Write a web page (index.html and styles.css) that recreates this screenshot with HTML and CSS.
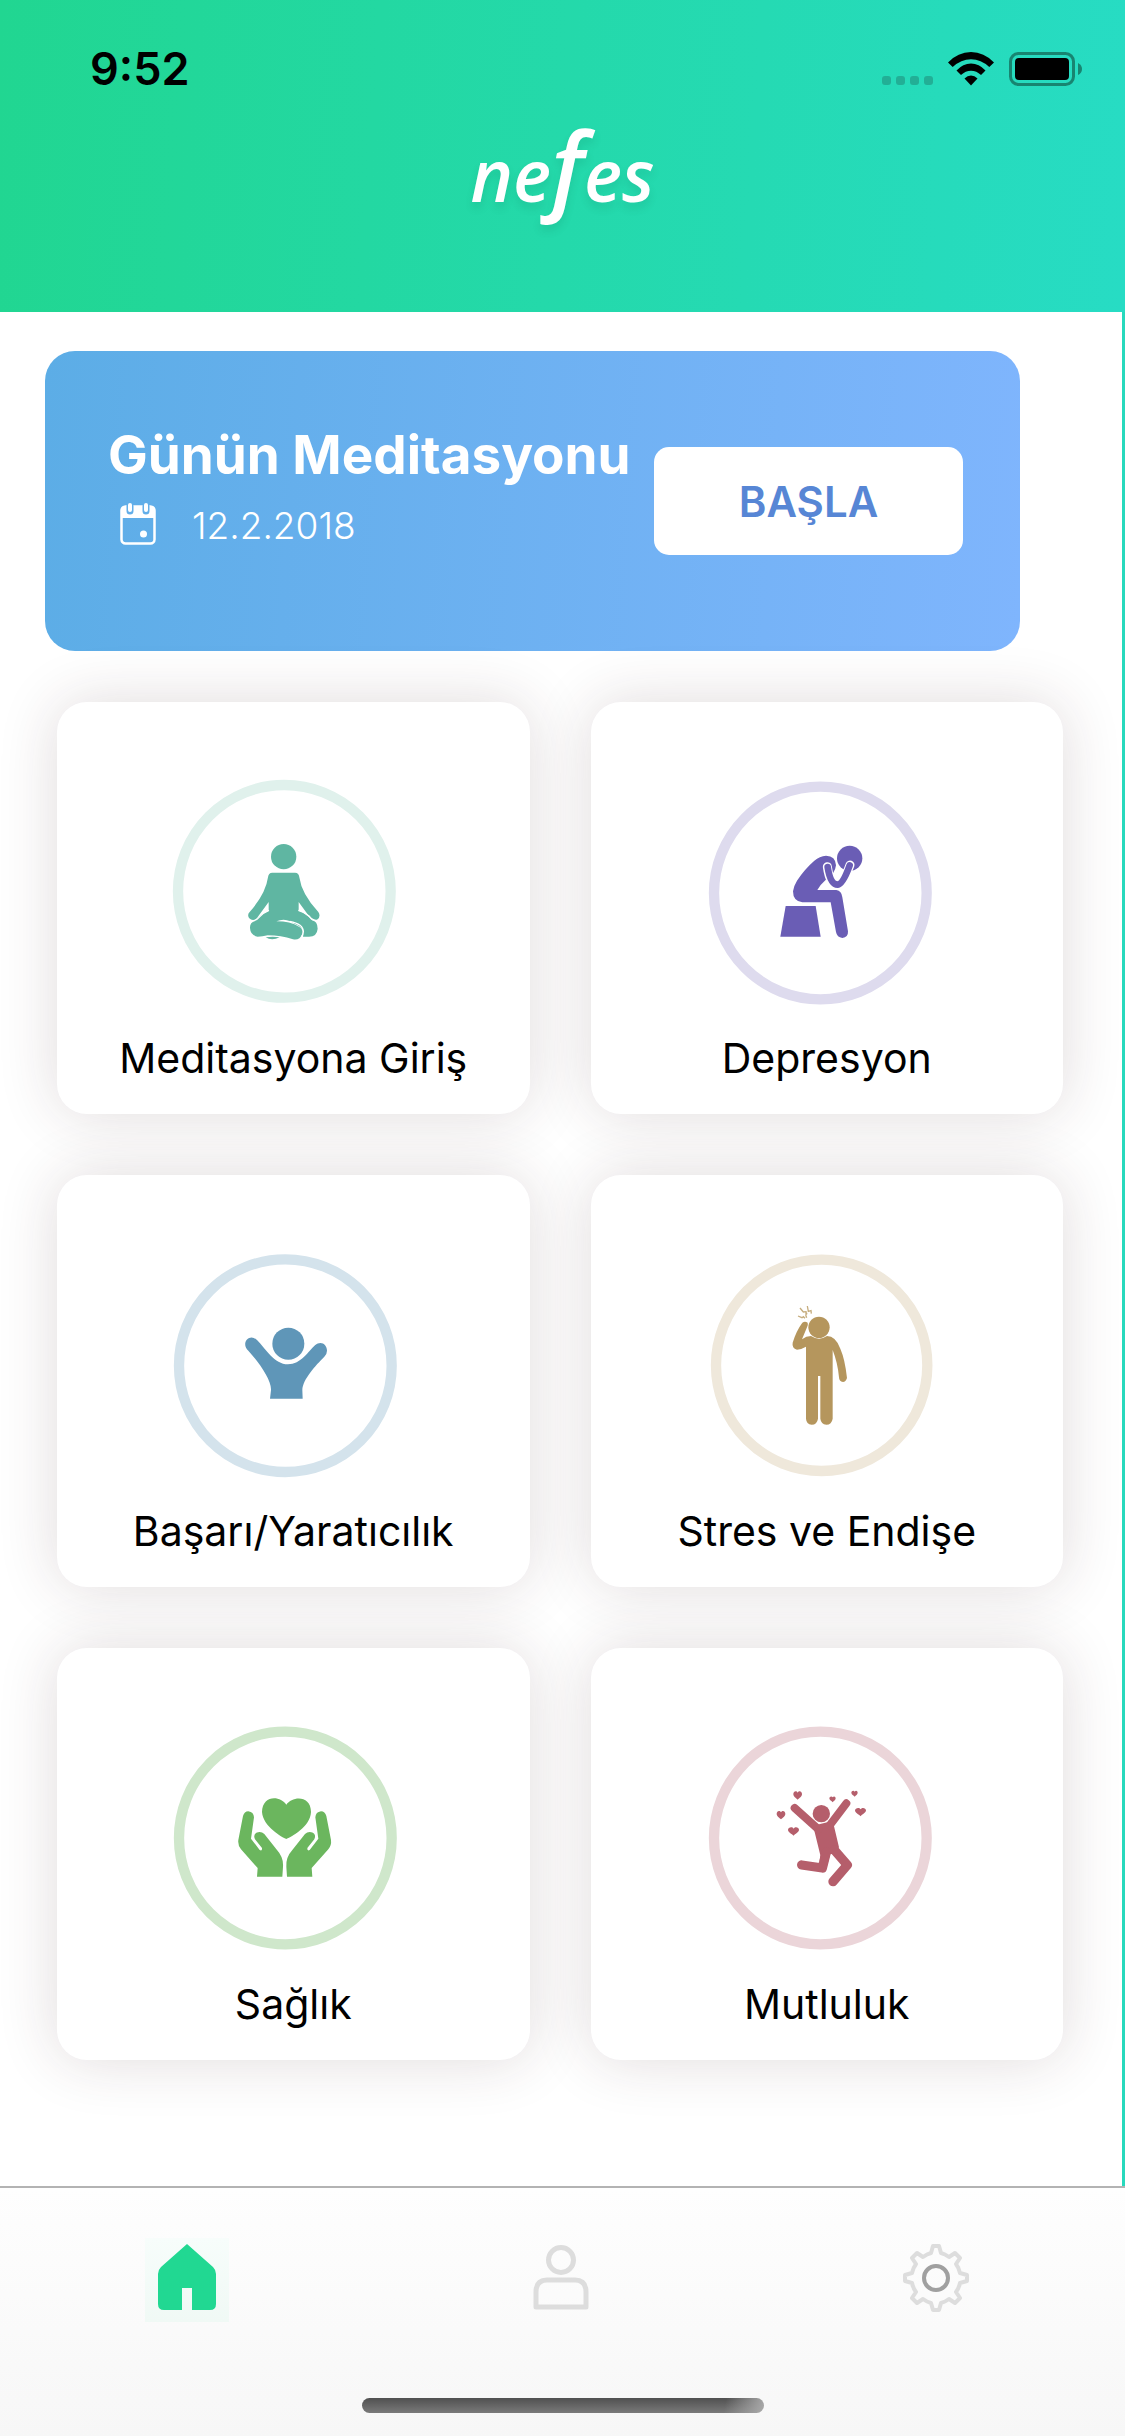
FILE: index.html
```html
<!DOCTYPE html>
<html lang="tr">
<head>
<meta charset="utf-8">
<meta name="viewport" content="width=device-width, initial-scale=1">
<title>nefes</title>
<link rel="stylesheet" href="styles.css">
</head>
<body>
<div class="app">
  <header class="header">
    <div class="status">
      <span class="time">9:52</span>
      <div class="indicators">
        <svg class="signal" width="52" height="34" viewBox="0 0 52 34" aria-hidden="true"><g fill="#22af96"><rect x="0" y="24" width="9" height="9" rx="3"/><rect x="14" y="24" width="9" height="9" rx="3"/><rect x="28" y="24" width="9" height="9" rx="3"/><rect x="42" y="24" width="9" height="9" rx="3"/></g></svg>
        <svg class="wifi" width="46" height="34" viewBox="0 0 46 34" aria-hidden="true"><path d="M0 10.5Q10 0 23 0T46 10.5L41.300 15Q33 7.200 23 7.200T4.700 15Z"/><path d="M8.500 18.500Q15 11.500 23 11.500T37.500 18.500L33 23Q28.500 18.700 23 18.700T13 23Z"/><path d="M16.500 26.500Q19.500 23.500 23 23.500T29.500 26.500L23 33.500Z"/></svg>
        <svg class="battery" width="74" height="34" viewBox="0 0 74 34" aria-hidden="true"><rect x="1.500" y="1.500" width="63" height="31" rx="8" fill="none" stroke="#188571" stroke-width="3"/><rect x="6" y="6" width="54" height="22" rx="4"/><path d="M69 11q4 2 4 6t-4 6z" fill="#188571"/></svg>
      </div>
    </div>
    <h1 class="logo">ne<span class="logo-f">f</span>es</h1>
  </header>

  <main class="content">
    <section class="banner">
      <div class="banner-text">
        <h2 class="banner-title">Günün Meditasyonu</h2>
        <p class="banner-date">
          <svg width="36" height="44" viewBox="0 0 36 44" aria-hidden="true"><rect x="1.500" y="3.500" width="33" height="37" rx="4" fill="none" stroke="#fff" stroke-width="2.500"/><path d="M1 15V7q0-4 4-4h26q4 0 4 4v8z" fill="#fff"/><g stroke-linecap="round"><path d="M10 3v5M26 3v5" stroke="#62aee9" stroke-width="7"/><path d="M10 2v5M26 2v5" stroke="#fff" stroke-width="4"/></g><circle cx="23.500" cy="31" r="3.500" fill="#fff"/></svg>
          <time datetime="2018-02-12">12.2.2018</time>
        </p>
      </div>
      <button class="start" type="button">BAŞLA</button>
    </section>

    <nav class="grid" aria-label="Kategoriler">
      <a class="card" href="#giris">
        <svg class="ring" viewBox="0 0 780 780" aria-hidden="true">
          <circle cx="376" cy="394" r="319" fill="none" stroke="#e0f1ec" stroke-width="31"/>
          <g fill="#5fb6a2"><circle cx="374" cy="290" r="38"/>
          <path d="M340 338H408Q420 338 421 352Q428 403 478 456Q486 468 476 478Q464 486 454 474L419 426V452Q442 460 458 480Q476 484 476 506Q474 530 450 530H432Q436 508 420 498Q402 490 394 484Q374 474 352 484Q394 484 420 500Q434 508 430 522Q422 542 402 538Q366 526 326 526Q310 530 296 530Q274 526 273 504Q272 488 288 482Q304 462 329 452V426L294 474Q282 486 270 474Q264 464 272 456Q320 402 327 352Q328 338 340 338Z"/>
          <path d="M320 532Q342 528 362 532Q338 544 320 532Z"/></g>
          <path d="M282 482Q292 482 300 472Q312 458 330 451M418 451Q436 456 450 468Q460 482 474 482M392 484Q434 492 433 516Q432 524 428 530" fill="none" stroke="#fff" stroke-width="4"/>
        </svg>
        <span class="label">Meditasyona Giriş</span>
      </a>
      <a class="card" href="#depresyon">
        <svg class="ring" viewBox="6 0 780 780" aria-hidden="true">
          <circle cx="388" cy="399" r="319" fill="none" stroke="#dedbee" stroke-width="31"/>
          <g fill="#6a5db5"><path d="M284 438H374L389 530H268Z"/><circle cx="476" cy="295" r="38"/>
          <path d="M405 287Q434 288 435 316Q434 328 426 340L406 358Q388 374 379 390H436Q452 392 454 412L471 514Q472 532 454 534Q438 532 435 516L419 427H334Q306 424 306 394Q308 378 318 362Q340 328 370 302Q386 288 405 287Z"/></g>
          <path d="M409 320Q416 374 440 374Q456 372 477 315" fill="none" stroke="#fff" stroke-width="27" stroke-linecap="round"/>
          <path d="M410 321Q418 374 440 374Q456 372 476 316" fill="none" stroke="#6a5db5" stroke-width="20" stroke-linecap="round"/>
        </svg>
        <span class="label">Depresyon</span>
      </a>
      <a class="card" href="#basari">
        <svg class="ring" viewBox="0 -5 780 780" aria-hidden="true">
          <circle cx="379" cy="393" r="319" fill="none" stroke="#d4e3ec" stroke-width="31"/>
          <g fill="#5f96b8"><circle cx="388" cy="327" r="48"/><path d="M294 316C320 342 346 389 387 389C426 389 448 350 468 332C486 316 504 330 504 348Q504 358 496 366C470 392 431 434 430 466L431 492H333L336 466C338 438 302 386 268 348C252 334 258 312 274 309Q284 307 294 316Z"/></g>
        </svg>
        <span class="label">Başarı/Yaratıcılık</span>
      </a>
      <a class="card" href="#stres">
        <svg class="ring" viewBox="6 -5 780 780" aria-hidden="true">
          <circle cx="392" cy="392" r="317" fill="none" stroke="#efe8db" stroke-width="31"/>
          <g fill="#b5965d"><circle cx="384" cy="278" r="32"/>
          <path d="M334 264Q342 258 350 264Q352 270 348 278L333 314Q346 304 360 304Q384 320 408 304Q434 304 448 342Q462 374 468 430Q464 442 456 442Q444 440 444 428Q440 384 425 346V552Q422 570 406 570Q390 568 388 552V424H381V552Q378 570 362 570Q346 568 345 552V336Q332 344 318 345Q302 340 305 324Q316 288 334 264Z"/></g>
          <path d="M327 220l10 12 8-1 0 10M349 214l3 16 8-2 1 9M321 244l12 5 4-3 5 5M344 231l4 8M347 249l-3-8" fill="none" stroke="#c6ad7e" stroke-width="4"/>
        </svg>
        <span class="label">Stres ve Endişe</span>
      </a>
      <a class="card" href="#saglik">
        <svg class="ring" viewBox="0 -4 780 780" aria-hidden="true">
          <circle cx="379" cy="392" r="319" fill="none" stroke="#cfe7cb" stroke-width="31"/>
          <g fill="#6bb65e"><path d="M382 292C399 266 456 262 456 314C454 360 394 390 382 395C370 390 312 358 309 314C310 262 364 264 382 292Z"/>
          <path id="hand" d="M294 508L296 482L246 426Q236 414 238 398L252 326Q256 312 268 312Q284 314 285 330L276 394L302 428Q310 432 309 422L288 396Q282 382 292 376Q306 370 316 380L354 428Q374 450 372 478L370 508Z"/>
          <use href="#hand" transform="matrix(-1 0 0 1 754 0)"/></g>
        </svg>
        <span class="label">Sağlık</span>
      </a>
      <a class="card" href="#mutluluk">
        <svg class="ring" viewBox="6 -4 780 780" aria-hidden="true">
          <circle cx="388" cy="392" r="319" fill="none" stroke="#ebd5d9" stroke-width="31"/>
          <circle cx="391" cy="319" r="26" fill="#b55e6b"/>
          <path d="M372 354L412 344L428 352L444 420L430 440H418L404 490L386 460L388 444L370 370Z" fill="#b55e6b"/>
          <g fill="none" stroke="#b55e6b" stroke-linecap="round" stroke-linejoin="round"><path d="M311 302L382 366M466 288L416 354" stroke-width="24"/><path d="M332 473L394 482L406 434M430 428L469 473L426 523" stroke-width="28"/></g>
          <g fill="#b55e6b"><path id="heart" d="M320 256c4-8 13-4 13 4 0 8-8 12-13 17-5-5-13-9-13-17 0-8 9-12 13-4z"/><use href="#heart" x="-50" y="59"/><path id="wide" d="M308 364c5-8 16-3 16 3 0 8-12 12-16 18-6-6-17-10-17-18 0-6 12-11 17-3z"/><use href="#wide" x="201" y="-58"/><path id="mini" d="M425 270c3-5 9-3 9 3 0 6-6 8-9 12-3-4-10-6-10-12 0-6 8-8 10-3z"/><use href="#mini" x="66" y="-17"/></g>
        </svg>
        <span class="label">Mutluluk</span>
      </a>
    </nav>
  </main>

  <footer class="footer">
    <nav class="tabs" aria-label="Sekmeler">
      <a class="tab tab-home" href="#home" aria-label="Ana sayfa">
        <svg width="84" height="84" viewBox="0 0 84 84" aria-hidden="true"><path d="M42 6L68 29Q71 32 71 36V66Q71 72 65 72H47V50H37V72H19Q13 72 13 66V36Q13 32 16 29Z" fill="#21d892"/></svg>
      </a>
      <a class="tab" href="#profile" aria-label="Profil">
        <svg width="84" height="84" viewBox="0 0 84 84" aria-hidden="true"><g fill="none" stroke="#ddd" stroke-width="5"><circle cx="41" cy="22" r="12.500"/><path d="M16 69V54Q16 42 27 42H55Q66 42 66 54V69Z" stroke-linejoin="round"/></g></svg>
      </a>
      <a class="tab" href="#settings" aria-label="Ayarlar">
        <svg width="84" height="84" viewBox="0 0 84 84" aria-hidden="true"><path d="M37 15L39 8H45L47 15Q51 16 55 19L61 15L66 20L62 26Q65 30 66 35L73 37V43L66 45Q65 50 62 54L66 60L61 65L55 61Q51 64 47 65L45 72H39L37 65Q33 64 29 61L23 65L18 60L22 54Q19 50 18 45L11 43V37L18 35Q19 30 22 26L18 20L23 15L29 19Q33 16 37 15Z" fill="none" stroke="#ddd" stroke-width="4" stroke-linejoin="round"/><circle cx="42" cy="40" r="12" fill="none" stroke="#a0a0a0" stroke-width="4"/></svg>
      </a>
    </nav>
    <div class="home-bar"></div>
  </footer>
</div>
</body>
</html>
```
FILE: styles.css
```css
* { box-sizing: border-box; }

body {
  margin: 0;
  font-family: Inter, "Liberation Sans", sans-serif;
  color: #000;
  background: #fff;
}

.app {
  min-height: 100vh;
  display: flex;
  flex-direction: column;
}

.header {
  height: 312px;
  padding: 40px 42px 0 90px;
  background: linear-gradient(94deg, #21d691, #27dcc4);
}

.status {
  display: flex;
  justify-content: space-between;
  align-items: center;
  height: 58px;
}

.time {
  font-size: 45px;
  font-weight: 600;
  line-height: 56px;
}

.indicators {
  display: flex;
  align-items: center;
}

.wifi { margin: 0 15px 0 14px; }

.logo {
  margin: 20px 0 0;
  padding-right: 48px;
  font: italic 600 72px/112px "Open Sans", sans-serif;
  text-align: center;
  color: #fff;
  text-shadow: 0 6px 8px rgba(0, 80, 60, .12);
}

.logo-f {
  font-size: 96px;
  line-height: 0;
}

.content {
  flex: 1;
  padding: 39px 59px 120px 57px;
  border-right: 3px solid #27d9bd;
}

.banner {
  display: flex;
  align-items: center;
  justify-content: space-between;
  height: 300px;
  margin: 0 43px 0 -12px;
  padding: 0 57px 0 63px;
  border-radius: 30px;
  background: linear-gradient(94deg, #5cade6, #7fb5fd);
  color: #fff;
}

.banner-text { padding-bottom: 20px; }

.banner-title {
  margin: 0;
  font-size: 53px;
  font-weight: 700;
  line-height: 68px;
  white-space: nowrap;
}

.banner-date {
  display: flex;
  align-items: center;
  gap: 36px;
  height: 72px;
  margin: 0;
  padding-left: 12px;
  font-size: 37px;
  font-weight: 300;
}

.start {
  flex: none;
  width: 309px;
  height: 108px;
  border: 0;
  border-radius: 15px;
  background: #fff;
  color: #5786d5;
  font: inherit;
  font-size: 42px;
  font-weight: 600;
}

.grid {
  display: grid;
  grid-template-columns: 1fr 1fr;
  gap: 61px;
  margin-top: 51px;
}

.card {
  display: flex;
  flex-direction: column;
  align-items: center;
  height: 412px;
  padding-top: 58px;
  border-radius: 30px;
  background: #fff;
  box-shadow: 0 0 60px rgba(60, 30, 40, .16);
  color: #000;
  text-decoration: none;
}

.ring {
  width: 260px;
  height: 260px;
  margin-right: 8px;
}

.label {
  font-size: 41px;
  line-height: 52px;
  margin-top: 12px;
}

.footer {
  height: 250px;
  border-top: 2px solid #b3b3b3;
  background: linear-gradient(#fefefe, #f7f7f7);
}

.tabs {
  display: flex;
  justify-content: space-between;
  padding: 50px 147px 0 145px;
}

.tab { display: flex; }

.tab-home { background: linear-gradient(#f7fdfb, #f0f9f5); }

.home-bar {
  width: 402px;
  height: 15px;
  margin: 76px auto 0;
  border-radius: 8px;
  background: linear-gradient(100deg, transparent 90%, #aaa), linear-gradient(#505050, #7a7a7a);
}
```
